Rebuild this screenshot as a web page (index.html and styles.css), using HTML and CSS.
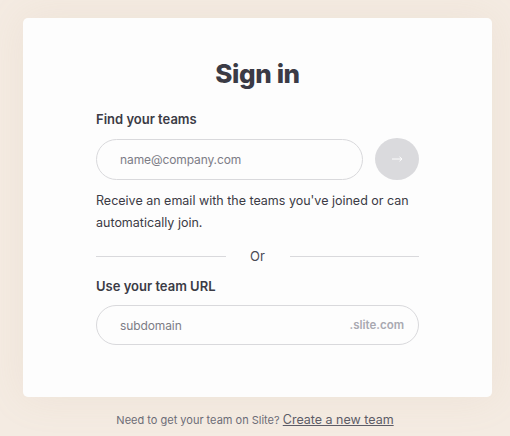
FILE: index.html
```html
<!DOCTYPE html>
<html>
<head>
<meta charset="utf-8">
<link rel="stylesheet" href="styles.css">
</head>
<body>
<main class="page">
  <section class="card">
    <h1 class="title">Sign in</h1>
    <div class="content">
      <label class="label">Find your teams</label>
      <div class="email-row">
        <div class="field"><span class="placeholder">name@company.com</span></div>
        <button class="go" aria-label="Continue">
          <svg width="11" height="6" viewBox="0 0 11 6"><path d="M0 3H10M7.5 0.8L10 3L7.5 5.2" fill="none" stroke="#fdfdfd" stroke-width="1"/></svg>
        </button>
      </div>
      <p class="hint">Receive an email with the teams you've joined or can automatically join.</p>
      <div class="divider"><span class="line"></span><span class="or">Or</span><span class="line"></span></div>
      <label class="label">Use your team URL</label>
      <div class="field url">
        <span class="placeholder">subdomain</span>
        <span class="suffix">.slite.com</span>
      </div>
    </div>
  </section>
  <p class="footer">Need to get your team on Slite? <a class="link" href="#">Create a new team</a></p>
</main>
</body>
</html>
```
FILE: styles.css
```css
* { box-sizing: border-box; }
html, body { margin: 0; height: 100%; }
body {
  background: #f4ebe2;
  font-family: Inter, "Noto Sans", sans-serif;
  color: #3b3b45;
}
.page {
  padding: 18px 18px 0 23px;
  display: flex;
  flex-direction: column;
  align-items: stretch;
}
.card {
  background: #fdfdfd;
  border-radius: 5px;
  height: 379px;
  padding: 39px 73px 0 73px;
  box-shadow: 0 0 40px rgba(200, 170, 140, 0.12);
}
.title {
  margin: 0 0 19px;
  text-align: center;
  font-size: 26px;
  font-weight: 800;
  letter-spacing: -0.4px;
  line-height: 34px;
  color: #3b3b45;
}
.content { display: flex; flex-direction: column; }
.label {
  font-size: 13px;
  font-weight: 600;
  line-height: 18px;
  color: #3b3b45;
}
.email-row {
  display: flex;
  gap: 12px;
  margin-top: 10px;
  align-items: center;
}
.field {
  flex: 1;
  height: 41px;
  border: 1px solid #d9d9dc;
  border-radius: 21px;
  display: flex;
  align-items: center;
  padding: 0 0 0 23px;
  font-size: 12px;
  background: #fdfdfd;
}
.placeholder { color: #7c7c86; letter-spacing: -0.1px; }
.go {
  width: 44px;
  height: 42px;
  border-radius: 50%;
  border: none;
  background: #dadadd;
  padding: 0;
  display: flex;
  align-items: center;
  justify-content: center;
}
.go svg { display: block; }
.hint {
  margin: 10px 0 0;
  font-size: 12.5px;
  line-height: 22px;
  color: #3b3b45;
}
.divider {
  display: flex;
  align-items: center;
  gap: 12px;
  margin-top: 12px;
  height: 20px;
}
.line { flex: 1; height: 1px; background: #d9d9dc; }
.or {
  width: 40px;
  text-align: center;
  font-size: 13px;
  color: #4a4a54;
}
.divider + .label { margin-top: 11px; }
.url {
  margin-top: 10px;
  flex: none;
  height: 40px;
  justify-content: space-between;
  padding-right: 14px;
}
.suffix { color: #a9a9b1; font-weight: 600; font-size: 11.5px; }
.footer {
  margin: 15px 0 0;
  text-align: center;
  font-size: 11px;
  color: #6c6c76;
  padding-right: 5px;
}
.link {
  color: #5c5c66;
  font-size: 12.5px;
  text-decoration: underline;
}
```
